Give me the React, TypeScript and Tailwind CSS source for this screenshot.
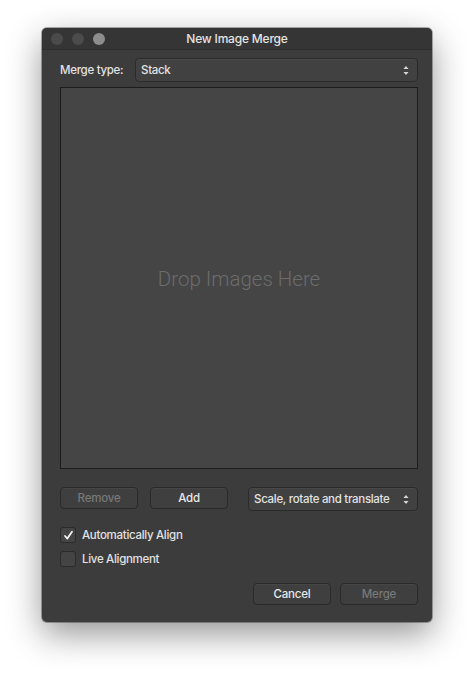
import { ReactNode } from "react";

function Stepper() {
  return (
    <svg width="6" height="11" viewBox="0 0 6 11" className="shrink-0">
      <path d="M3 1 L5.5 4 H0.5 Z" fill="#d8d8d8" />
      <path d="M3 10 L5.5 7 H0.5 Z" fill="#d8d8d8" />
    </svg>
  );
}

function PopUp({ label, className }: { label: string; className?: string }) {
  return (
    <div
      className={`flex h-[24px] items-center justify-between rounded-[4px] border border-[#2a2a2a] bg-[#414141] pl-[5px] pr-[8px] text-[11.5px] font-medium tracking-[-0.3px] text-[#e2e2e2] shadow-[inset_0_1px_0_rgba(255,255,255,0.04)] ${className ?? ""}`}
    >
      <span className="pt-px">{label}</span>
      <Stepper />
    </div>
  );
}

function Button({ children, disabled }: { children: ReactNode; disabled?: boolean }) {
  return (
    <button
      className={`flex h-[22px] w-[78px] items-center justify-center rounded-[4px] border border-[#2a2a2a] bg-[#3f3f3f] pt-px text-[11.5px] font-medium tracking-[-0.2px] shadow-[inset_0_1px_0_rgba(255,255,255,0.04)] ${
        disabled ? "text-[#787878]" : "text-[#e8e8e8]"
      }`}
    >
      {children}
    </button>
  );
}

function Checkbox({ label, checked }: { label: string; checked?: boolean }) {
  return (
    <label className="flex h-[16px] items-center gap-[6px] text-[11.5px] font-medium tracking-[-0.3px] text-[#e2e2e2]">
      <span className="flex size-[16px] items-center justify-center rounded-[3px] border border-[#2c2c2c] bg-[#444444]">
        {checked && (
          <svg width="11" height="11" viewBox="0 0 11 11">
            <path
              d="M2 6 L4.3 8.6 L9 1.8"
              fill="none"
              stroke="#f2f2f2"
              strokeWidth="1.8"
              strokeLinecap="round"
              strokeLinejoin="round"
            />
          </svg>
        )}
      </span>
      <span className="pt-px">{label}</span>
    </label>
  );
}

export default function App() {
  return (
    <div className="flex min-h-screen justify-center bg-white pt-[28px] font-['Inter','Liberation_Sans',Arial,sans-serif]">
      <div className="flex h-[594px] w-[390px] flex-col overflow-hidden rounded-[5px] bg-[#3c3c3c] shadow-[0_12px_34px_rgba(0,0,0,0.42),0_0_0_1px_rgba(0,0,0,0.3)]">
        {/* title bar */}
        <div className="grid h-[22px] shrink-0 grid-cols-[1fr_auto_1fr] items-center border-b border-[#2d2d2d] bg-[#353535]">
          <div className="flex gap-[9px] pl-[9px]">
            <span className="size-[12px] rounded-full bg-[#4b4b4b]" />
            <span className="size-[12px] rounded-full bg-[#4b4b4b]" />
            <span className="size-[12px] rounded-full bg-[#8d8d8d]" />
          </div>
          <span className="pt-px text-[12px] font-medium tracking-[-0.2px] text-[#e4e4e4]">New Image Merge</span>
          <div />
        </div>

        <div className="flex flex-1 flex-col pl-[18px] pr-[14px]">
          <div className="mt-[8px] flex items-center">
            <span className="w-[75px] shrink-0 pt-px text-[11.5px] font-medium tracking-[-0.3px] text-[#e2e2e2]">
              Merge type:
            </span>
            <PopUp label="Stack" className="flex-1" />
          </div>

          <div className="mt-[5px] flex h-[382px] items-center justify-center border border-[#1c1c1c] bg-[#454545]">
            <span className="pt-[2px] font-['Roboto',sans-serif] text-[20.5px] font-light text-[#6c6c6c]">
              Drop Images Here
            </span>
          </div>

          <div className="mt-[18px] flex items-start">
            <div className="flex gap-[12px]">
              <Button disabled>Remove</Button>
              <Button>Add</Button>
            </div>
            <PopUp label="Scale, rotate and translate" className="ml-auto w-[170px]" />
          </div>

          <div className="mt-[16px] flex flex-col gap-[8px]">
            <Checkbox label="Automatically Align" checked />
            <Checkbox label="Live Alignment" />
          </div>

          <div className="mt-[16px] flex justify-end gap-[9px]">
            <Button>Cancel</Button>
            <Button disabled>Merge</Button>
          </div>
        </div>
      </div>
    </div>
  );
}
